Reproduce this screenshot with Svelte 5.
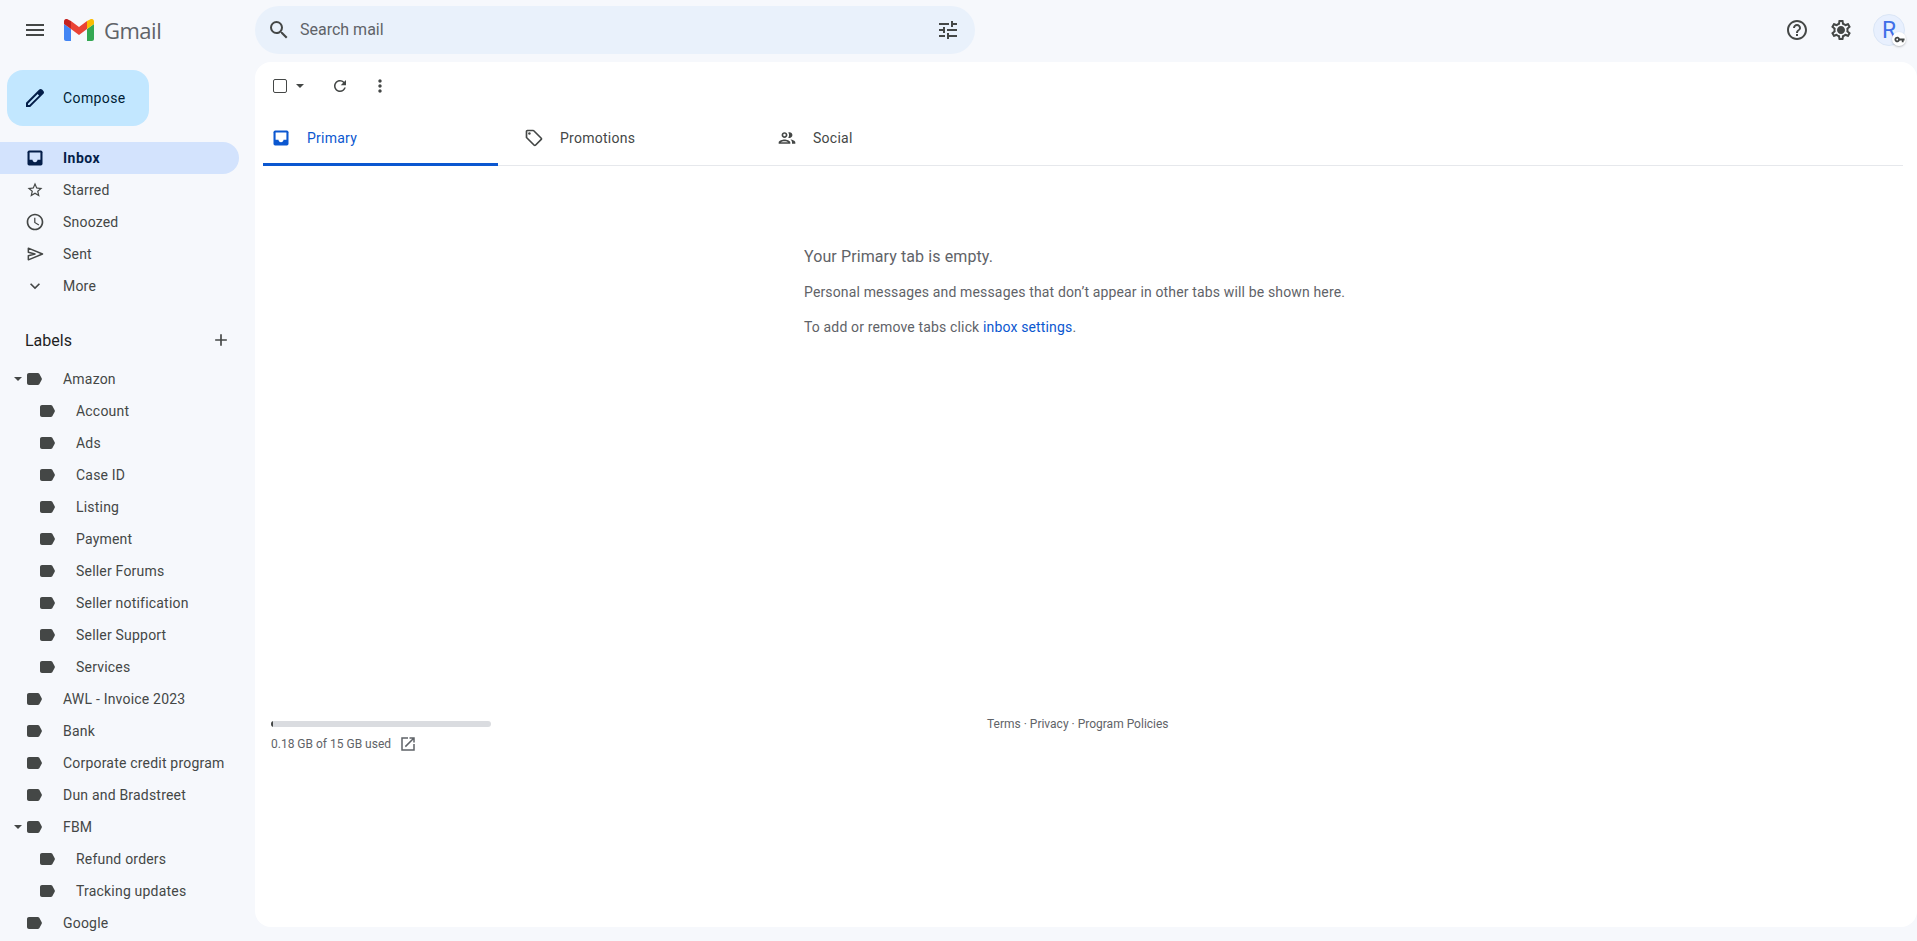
<script>
    const nav = [
        { name: "Starred", icon: "star" },
        { name: "Snoozed", icon: "clock" },
        { name: "Sent", icon: "send" },
        { name: "More", icon: "chevron" },
    ];
    const labels = [
        { name: "Amazon", caret: true },
        { name: "Account", sub: true },
        { name: "Ads", sub: true },
        { name: "Case ID", sub: true },
        { name: "Listing", sub: true },
        { name: "Payment", sub: true },
        { name: "Seller Forums", sub: true },
        { name: "Seller notification", sub: true },
        { name: "Seller Support", sub: true },
        { name: "Services", sub: true },
        { name: "AWL - Invoice 2023" },
        { name: "Bank" },
        { name: "Corporate credit program" },
        { name: "Dun and Bradstreet" },
        { name: "FBM", caret: true },
        { name: "Refund orders", sub: true },
        { name: "Tracking updates", sub: true },
        { name: "Google" },
    ];
</script>

<div class="page">
    <header class="topbar">
        <div class="brand">
            <svg class="burger" width="24" height="24" viewBox="0 0 24 24"><path d="M3 18h18v-2H3v2zm0-5h18v-2H3v2zm0-7v2h18V6H3z" fill="#444746" /></svg>
            <svg class="logo" width="30" height="22" viewBox="0 0 30 22">
                <path d="M2 22h5V10L0 5v15c0 1.100.9 2 2 2z" fill="#4285f4" />
                <path d="M23 22h5c1.100 0 2-.9 2-2V5l-7 5z" fill="#34a853" />
                <path d="M23 2v8l7-5V2.500C30 .4 27.600-.8 26 .4z" fill="#fbbc04" />
                <path d="M7 10V2l8 6 8-6v8l-8 6z" fill="#ea4335" />
                <path d="M0 2.500V5l7 5V2L4 .4C2.400-.8 0 .4 0 2.500z" fill="#c5221f" />
            </svg>
            <span class="wordmark">Gmail</span>
        </div>
        <div class="search">
            <svg width="24" height="24" viewBox="0 0 24 24"><path d="M15.500 14h-.79l-.28-.27A6.471 6.471 0 0 0 16 9.500 6.500 6.500 0 1 0 9.500 16c1.610 0 3.090-.59 4.230-1.570l.27.28v.79l5 4.990L20.490 19l-4.990-5zm-6 0C7.010 14 5 11.990 5 9.500S7.010 5 9.500 5 14 7.010 14 9.500 11.990 14 9.500 14z" fill="#444746" /></svg>
            <span class="search-text">Search mail</span>
            <svg class="tune" width="24" height="24" viewBox="0 0 24 24"><path d="M3 17v2h6v-2H3zM3 5v2h10V5H3zm10 16v-2h8v-2h-8v-2h-2v6h2zM7 9v2H3v2h4v2h2V9H7zm14 4v-2H11v2h10zm-6-4h2V7h4V5h-4V3h-2v6z" fill="#444746" /></svg>
        </div>
        <div class="top-actions">
            <svg width="24" height="24" viewBox="0 0 24 24"><path d="M11 18h2v-2h-2v2zm1-16C6.480 2 2 6.480 2 12s4.480 10 10 10 10-4.480 10-10S17.520 2 12 2zm0 18c-4.410 0-8-3.590-8-8s3.590-8 8-8 8 3.590 8 8-3.590 8-8 8zm0-14c-2.210 0-4 1.790-4 4h2c0-1.100.9-2 2-2s2 .9 2 2c0 2-3 1.750-3 5h2c0-2.250 3-2.500 3-5 0-2.210-1.790-4-4-4z" fill="#444746" /></svg>
            <svg width="24" height="24" viewBox="0 0 24 24"><path d="M19.430 12.980c.04-.32.07-.64.07-.98 0-.34-.03-.66-.07-.98l2.110-1.650c.19-.15.24-.42.12-.64l-2-3.460c-.09-.16-.26-.25-.44-.25-.06 0-.12.01-.17.03l-2.490 1c-.52-.4-1.080-.73-1.690-.98l-.38-2.650C14.460 2.180 14.250 2 14 2h-4c-.25 0-.46.18-.49.42l-.38 2.650c-.61.25-1.170.59-1.690.98l-2.490-1c-.06-.02-.12-.03-.18-.03-.17 0-.34.09-.43.25l-2 3.460c-.13.22-.07.49.12.64l2.110 1.650c-.04.32-.07.65-.07.98 0 .33.03.66.07.98l-2.110 1.650c-.19.15-.24.42-.12.64l2 3.460c.09.16.26.25.44.25.06 0 .12-.01.17-.03l2.490-1c.52.4 1.080.73 1.690.98l.38 2.650c.03.24.24.42.49.42h4c.25 0 .46-.18.49-.42l.38-2.650c.61-.25 1.170-.59 1.690-.98l2.490 1c.06.02.12.03.18.03.17 0 .34-.09.43-.25l2-3.460c.12-.22.07-.49-.12-.64l-2.110-1.650zm-1.980-1.710c.04.31.05.52.05.73 0 .21-.02.43-.05.73l-.14 1.130.89.7 1.080.84-.7 1.210-1.270-.51-1.040-.42-.9.68c-.43.32-.84.56-1.250.73l-1.060.43-.16 1.130-.2 1.350h-1.400l-.19-1.350-.16-1.130-1.060-.43c-.43-.18-.83-.41-1.230-.71l-.91-.7-1.060.43-1.270.51-.7-1.210 1.080-.84.89-.7-.14-1.130c-.03-.31-.05-.54-.05-.74s.02-.43.05-.73l.14-1.130-.89-.7-1.080-.84.7-1.210 1.270.51 1.040.42.9-.68c.43-.32.84-.56 1.250-.73l1.060-.43.16-1.130.2-1.350h1.390l.19 1.350.16 1.130 1.060.43c.43.18.83.41 1.230.71l.91.7 1.060-.43 1.270-.51.7 1.210-1.070.85-.89.7.14 1.130zM12 8c-2.210 0-4 1.790-4 4s1.790 4 4 4 4-1.790 4-4-1.790-4-4-4z" fill="#444746" /></svg>
            <div class="avatar">
                R
                <span class="key">
                    <svg width="11" height="11" viewBox="0 0 24 24"><path d="M12.650 10A6 6 0 1 0 12.650 14H17v4h4v-4h2v-4H12.650zM7 14a2 2 0 1 1 0-4 2 2 0 0 1 0 4z" fill="#444746" /></svg>
                </span>
            </div>
        </div>
    </header>

    <div class="body">
        <aside class="sidebar">
            <button class="compose">
                <svg width="24" height="24" viewBox="0 0 24 24"><path d="M20.410 4.940l-1.350-1.350c-.78-.78-2.050-.78-2.830 0L3 16.820V21h4.180L20.410 7.770c.79-.78.79-2.050 0-2.830zm-14 14.120L5 19v-1.360l9.660-9.660 1.410 1.410-9.660 9.670z" fill="#041e49" /></svg>
                <span>Compose</span>
            </button>

            <nav class="nav">
                <div class="nav-row active">
                    <span class="nav-icon">
                        <svg width="20" height="20" viewBox="0 0 24 24"><rect x="3" y="3" width="18" height="18" rx="2" fill="#041e49" /><path d="M5.500 5.500h13V14H15c0 1.660-1.350 3-3 3s-3-1.340-3-3H5.500z" fill="#d3e3fd" /></svg>
                    </span>
                    <span>Inbox</span>
                </div>
                {#each nav as item}
                    <div class="nav-row">
                        <span class="nav-icon">
                            {#if item.icon === "star"}
                                <svg width="18" height="18" viewBox="0 0 24 24"><path d="M22 9.240l-7.190-.62L12 2 9.190 8.630 2 9.240l5.460 4.730L5.820 21 12 17.270 18.180 21l-1.630-7.030L22 9.240zM12 15.400l-3.760 2.270 1-4.280-3.320-2.880 4.380-.38L12 6.100l1.710 4.040 4.380.38-3.320 2.880 1 4.280L12 15.400z" fill="#444746" /></svg>
                            {:else if item.icon === "clock"}
                                <svg width="20" height="20" viewBox="0 0 24 24"><path d="M11.990 2C6.470 2 2 6.480 2 12s4.470 10 9.990 10C17.520 22 22 17.520 22 12S17.520 2 11.990 2zM12 20c-4.420 0-8-3.580-8-8s3.580-8 8-8 8 3.580 8 8-3.580 8-8 8zm.5-13H11v6l5.250 3.150.75-1.230-4.500-2.670z" fill="#444746" /></svg>
                            {:else if item.icon === "send"}
                                <svg width="20" height="20" viewBox="0 0 24 24"><path d="M4 5l17 7-17 7v-5l8-2-8-2z" fill="none" stroke="#444746" stroke-width="1.800" stroke-linejoin="round" /></svg>
                            {:else}
                                <svg width="20" height="20" viewBox="0 0 24 24"><path d="M16.590 8.590L12 13.170 7.410 8.590 6 10l6 6 6-6z" fill="#444746" /></svg>
                            {/if}
                        </span>
                        <span>{item.name}</span>
                    </div>
                {/each}
            </nav>

            <div class="labels-head">
                <span>Labels</span>
                <svg width="20" height="20" viewBox="0 0 24 24"><path d="M19 13h-6v6h-2v-6H5v-2h6V5h2v6h6v2z" fill="#444746" /></svg>
            </div>

            <div class="labels">
                {#each labels as label}
                    <div class="label-row" class:sub={label.sub}>
                        {#if label.caret}
                            <span class="caret"></span>
                        {/if}
                        <svg class="tag" width="15" height="12" viewBox="0 0 15 12"><path d="M2 0h8.800c.6 0 1.100.3 1.500.8l2.400 4.400c.3.5.3 1.100 0 1.600l-2.400 4.400c-.4.500-.9.800-1.500.800H2c-1.100 0-2-.9-2-2V2C0 .9.900 0 2 0z" fill="#444746" /></svg>
                        <span>{label.name}</span>
                    </div>
                {/each}
            </div>
        </aside>

        <main class="card">
            <div class="toolbar">
                <span class="check"></span>
                <span class="check-caret"></span>
                <svg class="refresh" width="18" height="18" viewBox="0 0 24 24"><path d="M17.650 6.350A7.958 7.958 0 0 0 12 4c-4.420 0-7.990 3.580-7.990 8s3.570 8 7.990 8c3.730 0 6.840-2.550 7.730-6h-2.080A5.990 5.990 0 0 1 12 18c-3.310 0-6-2.690-6-6s2.690-6 6-6c1.660 0 3.140.69 4.220 1.780L13 11h7V4l-2.350 2.350z" fill="#444746" /></svg>
                <svg class="dots" width="20" height="20" viewBox="0 0 24 24"><path d="M12 8c1.100 0 2-.9 2-2s-.9-2-2-2-2 .9-2 2 .9 2 2 2zm0 2c-1.100 0-2 .9-2 2s.9 2 2 2 2-.9 2-2-.9-2-2-2zm0 6c-1.100 0-2 .9-2 2s.9 2 2 2 2-.9 2-2-.9-2-2-2z" fill="#444746" /></svg>
            </div>

            <div class="tabs">
                <div class="tab active">
                    <svg width="20" height="20" viewBox="0 0 24 24"><rect x="3" y="3" width="18" height="18" rx="2" fill="#0b57d0" /><path d="M5.500 5.500h13V14H15c0 1.660-1.350 3-3 3s-3-1.340-3-3H5.500z" fill="#fff" /></svg>
                    <span>Primary</span>
                </div>
                <div class="tab">
                    <svg width="20" height="20" viewBox="0 0 24 24"><path d="M21.410 11.580l-9-9C12.050 2.220 11.550 2 11 2H4c-1.100 0-2 .9-2 2v7c0 .55.220 1.050.59 1.420l9 9c.36.36.86.58 1.410.58s1.050-.22 1.410-.59l7-7c.37-.36.59-.86.59-1.410s-.23-1.060-.59-1.420zM13 20l-9-9V4h7l9 9-7 7z" fill="#444746" /><circle cx="6.500" cy="6.500" r="1.500" fill="#444746" /></svg>
                    <span>Promotions</span>
                </div>
                <div class="tab">
                    <svg width="20" height="20" viewBox="0 0 24 24"><path d="M9 13.750c-2.340 0-7 1.170-7 3.500V19h14v-1.750c0-2.330-4.660-3.500-7-3.500zM4.340 17c.84-.58 2.870-1.250 4.660-1.250s3.820.67 4.660 1.250H4.340zM9 12c1.930 0 3.500-1.570 3.500-3.500S10.930 5 9 5 5.500 6.570 5.500 8.500 7.070 12 9 12zm0-5c.83 0 1.500.67 1.500 1.500S9.830 10 9 10s-1.500-.67-1.500-1.500S8.170 7 9 7zm7.040 6.810c1.160.84 1.960 1.960 1.960 3.440V19h4v-1.750c0-2.020-3.500-3.170-5.960-3.440zM15 12c1.930 0 3.500-1.570 3.500-3.500S16.930 5 15 5c-.54 0-1.040.13-1.500.35.630.89 1 1.980 1 3.150s-.37 2.260-1 3.150c.46.220.96.350 1.500.35z" fill="#444746" /></svg>
                    <span>Social</span>
                </div>
            </div>

            <section class="empty">
                <h2>Your Primary tab is empty.</h2>
                <p>Personal messages and messages that don’t appear in other tabs will be shown here.</p>
                <p>To add or remove tabs click <a href="#settings">inbox settings</a>.</p>
            </section>

            <footer class="foot">
                <div class="storage">
                    <div class="bar"><div class="used"></div></div>
                    <div class="storage-text">
                        <span>0.18 GB of 15 GB used</span>
                        <svg width="18" height="18" viewBox="0 0 24 24"><path d="M19 19H5V5h7V3H3v18h18v-9h-2v7zM14 3v2h3.590l-9.830 9.830 1.410 1.410L19 6.410V10h2V3h-7z" fill="#5f6368" /></svg>
                    </div>
                </div>
                <div class="terms">Terms · Privacy · Program Policies</div>
            </footer>
        </main>
    </div>
</div>

<style>
    :global(body) {
        margin: 0;
        background: #f6f8fc;
    }

    .page {
        height: 941px;
        overflow: hidden;
        display: flex;
        flex-direction: column;
        font-family: Roboto, "Liberation Sans", sans-serif;
        font-size: 14px;
        color: #444746;
    }

    .topbar {
        height: 62px;
        flex: none;
        display: flex;
        align-items: flex-start;
    }

    .brand {
        width: 255px;
        height: 60px;
        flex: none;
        display: flex;
        align-items: center;
        box-sizing: border-box;
        padding-left: 23px;
    }

    .logo {
        margin-left: 17px;
    }

    .wordmark {
        margin-left: 10px;
        font-family: "Open Sans", sans-serif;
        font-size: 22px;
        color: #5f6368;
        letter-spacing: -0.5px;
    }

    .search {
        width: 720px;
        height: 48px;
        margin-top: 6px;
        box-sizing: border-box;
        padding: 0 15px 0 12px;
        display: flex;
        align-items: center;
        background: #e9f1fb;
        border-radius: 24px;
    }

    .search-text {
        margin-left: 9px;
        margin-top: -2px;
        font-size: 16px;
        color: #5f6368;
        flex: 1;
    }

    .top-actions {
        margin-left: auto;
        height: 60px;
        display: flex;
        align-items: center;
        gap: 20px;
        padding-right: 12px;
    }

    .avatar {
        position: relative;
        width: 32px;
        height: 32px;
        box-sizing: border-box;
        border: 1px solid #dbe6f6;
        border-radius: 50%;
        background: #e8f0fe;
        color: #3f6fe8;
        font-size: 23px;
        display: flex;
        align-items: center;
        justify-content: center;
    }

    .key {
        position: absolute;
        right: -2px;
        bottom: -1px;
        width: 14px;
        height: 14px;
        border-radius: 50%;
        background: #fff;
        box-shadow: 0 1px 2px rgba(60, 64, 67, 0.3);
        display: flex;
        align-items: center;
        justify-content: center;
    }

    .body {
        flex: 1;
        min-height: 0;
        display: flex;
    }

    .sidebar {
        width: 255px;
        flex: none;
        padding-top: 8px;
        box-sizing: border-box;
        letter-spacing: 0.2px;
    }

    .compose {
        width: 142px;
        height: 56px;
        margin-left: 7px;
        padding: 0 0 0 16px;
        border: 0;
        border-radius: 16px;
        background: #c2e7ff;
        color: #001d35;
        font: 400 14px Roboto, sans-serif;
        letter-spacing: 0.4px;
        display: flex;
        align-items: center;
        gap: 16px;
    }

    .nav {
        margin-top: 16px;
    }

    .nav-row {
        width: 239px;
        height: 32px;
        box-sizing: border-box;
        padding-left: 25px;
        display: flex;
        align-items: center;
        gap: 18px;
        border-radius: 0 16px 16px 0;
    }

    .nav-icon {
        width: 20px;
        height: 20px;
        display: flex;
        align-items: center;
        justify-content: center;
    }

    .nav-row.active {
        background: #d3e3fd;
        color: #041e49;
        font-weight: 700;
        letter-spacing: 0.5px;
    }

    .labels-head {
        height: 40px;
        margin-top: 18px;
        padding: 0 24px 0 25px;
        display: flex;
        align-items: center;
        justify-content: space-between;
        font-size: 16px;
        letter-spacing: 0;
        color: #1f1f1f;
    }

    .labels {
        margin-top: 3px;
    }

    .label-row {
        position: relative;
        height: 32px;
        padding-left: 27px;
        display: flex;
        align-items: center;
        gap: 21px;
    }

    .label-row.sub {
        padding-left: 40px;
    }

    .caret {
        position: absolute;
        left: 14px;
        top: 14px;
        border: 4px solid transparent;
        border-top: 4px solid #444746;
        border-bottom: 0;
    }

    .card {
        flex: 1;
        height: 865px;
        display: flex;
        flex-direction: column;
        background: #fff;
        border-radius: 16px;
        overflow: hidden;
    }

    .toolbar {
        height: 48px;
        flex: none;
        box-sizing: border-box;
        padding-left: 18px;
        display: flex;
        align-items: center;
    }

    .check {
        width: 12px;
        height: 12px;
        border: 1.5px solid #444746;
        border-radius: 2px;
    }

    .check-caret {
        margin-left: 9px;
        border: 4px solid transparent;
        border-top: 4px solid #444746;
        border-bottom: 0;
    }

    .refresh {
        margin-left: 27px;
    }

    .dots {
        margin-left: 21px;
    }

    .tabs {
        height: 55px;
        flex: none;
        margin: 0 14px 0 8px;
        display: flex;
        border-bottom: 1px solid #e6e8ec;
    }

    .tab {
        width: 253px;
        box-sizing: border-box;
        padding-left: 8px;
        display: flex;
        align-items: center;
        gap: 16px;
        letter-spacing: 0.25px;
    }

    .tab.active {
        width: 235px;
        margin-right: 18px;
        color: #0b57d0;
        border-bottom: 3px solid #0b57d0;
        border-radius: 3px 3px 0 0;
        margin-bottom: -1px;
        padding-top: 3px;
    }

    .empty {
        flex: none;
        height: 555px;
        box-sizing: border-box;
        padding: 80px 0 0 549px;
        color: #5f6368;
    }

    .empty h2 {
        margin: 0;
        font-size: 16px;
        font-weight: 400;
        line-height: 22px;
        letter-spacing: 0.1px;
    }

    .empty p {
        margin: 14px 0 0;
        line-height: 21px;
        letter-spacing: 0.15px;
    }

    .empty a {
        color: #0b57d0;
        text-decoration: none;
    }

    .foot {
        padding: 0 0 0 16px;
        display: flex;
        align-items: flex-start;
        font-size: 12px;
        color: #5f6368;
    }

    .storage {
        width: 220px;
    }

    .bar {
        height: 6px;
        border-radius: 3px;
        background: #dadce0;
        overflow: hidden;
    }

    .used {
        width: 2px;
        height: 6px;
        background: #444746;
    }

    .storage-text {
        margin-top: 8px;
        display: flex;
        align-items: center;
        gap: 8px;
    }

    .terms {
        margin-left: 496px;
        margin-top: -4px;
    }
</style>
